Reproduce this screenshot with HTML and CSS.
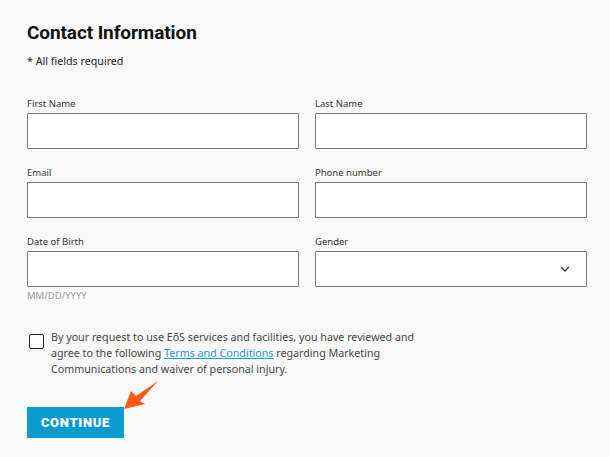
FILE: index.html
```html
<!DOCTYPE html>
<html lang="en">
<head>
<meta charset="utf-8">
<title>Contact Information</title>
<link rel="stylesheet" href="styles.css">
</head>
<body>
<main class="page">
  <h1 class="title">Contact Information</h1>
  <p class="note">* All fields required</p>
  <form class="form">
    <div class="grid">
      <div class="field">
        <label class="label">First Name</label>
        <div class="input"></div>
      </div>
      <div class="field">
        <label class="label">Last Name</label>
        <div class="input"></div>
      </div>
      <div class="field">
        <label class="label">Email</label>
        <div class="input"></div>
      </div>
      <div class="field">
        <label class="label">Phone number</label>
        <div class="input"></div>
      </div>
      <div class="field">
        <label class="label">Date of Birth</label>
        <div class="input"></div>
        <div class="hint">MM/DD/YYYY</div>
      </div>
      <div class="field">
        <label class="label">Gender</label>
        <div class="input select">
          <svg class="chev" width="10" height="6" viewBox="0 0 10 6"><path d="M1 1 L5 5 L9 1" fill="none" stroke="#333" stroke-width="1.3"/></svg>
        </div>
      </div>
    </div>
    <div class="consent">
      <span class="box"></span>
      <p class="consent-text">By your request to use EōS services and facilities, you have reviewed and agree to the following <a class="link" href="#">Terms and Conditions</a> regarding Marketing Communications and waiver of personal injury.</p>
    </div>
    <div class="actions">
      <button type="button" class="btn">CONTINUE</button>
      <svg class="arrow" width="40" height="32" viewBox="0 0 40 32">
        <polygon points="0,29 7,11 12,16 34,1 16,21 21,24" fill="#ff5a14"/>
      </svg>
    </div>
  </form>
</main>
</body>
</html>
```
FILE: styles.css
```css
html, body {
  margin: 0;
  padding: 0;
  background: #f9f9f9;
}
body {
  font-family: "Noto Sans", "Open Sans", sans-serif;
  color: #333;
}
.page {
  width: 560px;
  padding: 20px 0 0 27px;
}
.title {
  margin: 0;
  font-family: Roboto, "Liberation Sans", sans-serif;
  font-weight: 700;
  font-size: 19px;
  line-height: 26px;
  color: #111;
  letter-spacing: -0.1px;
}
.note {
  margin: 7px 0 0;
  font-size: 10.7px;
  line-height: 16px;
  color: #222;
}
.form {
  margin-top: 29px;
}
.grid {
  display: grid;
  grid-template-columns: 272px 272px;
  column-gap: 16px;
  row-gap: 18px;
}
.field {
  display: flex;
  flex-direction: column;
}
.label {
  font-size: 9.5px;
  line-height: 12px;
  color: #333;
  margin-bottom: 3px;
}
.input {
  height: 34px;
  background: #fff;
  border: 1px solid #777;
  border-radius: 1px;
}
.select {
  display: flex;
  align-items: center;
  justify-content: flex-end;
  padding-right: 16px;
}
.hint {
  margin-top: 3px;
  font-size: 9.5px;
  line-height: 12px;
  color: #999;
}
.consent {
  display: flex;
  align-items: flex-start;
  gap: 7px;
  margin-top: 27px;
  padding-left: 2px;
}
.box {
  flex: none;
  width: 13px;
  height: 13px;
  border: 1.5px solid #222;
  border-radius: 2px;
  background: #fff;
  margin-top: 5px;
}
.consent-text {
  margin: 0;
  width: 382px;
  font-size: 10.7px;
  line-height: 16px;
  color: #444;
}
.link {
  color: #1a9ad2;
  text-decoration: underline;
}
.actions {
  position: relative;
  margin-top: 30px;
}
.btn {
  display: block;
  width: 97px;
  height: 31px;
  border: none;
  border-radius: 0;
  background: #0a9bcf;
  color: #fff;
  font-family: Roboto, "Liberation Sans", sans-serif;
  font-weight: 900;
  font-size: 13px;
  letter-spacing: 0.7px;
  padding: 0;
}
.arrow {
  position: absolute;
  left: 97px;
  top: -27px;
}
```
